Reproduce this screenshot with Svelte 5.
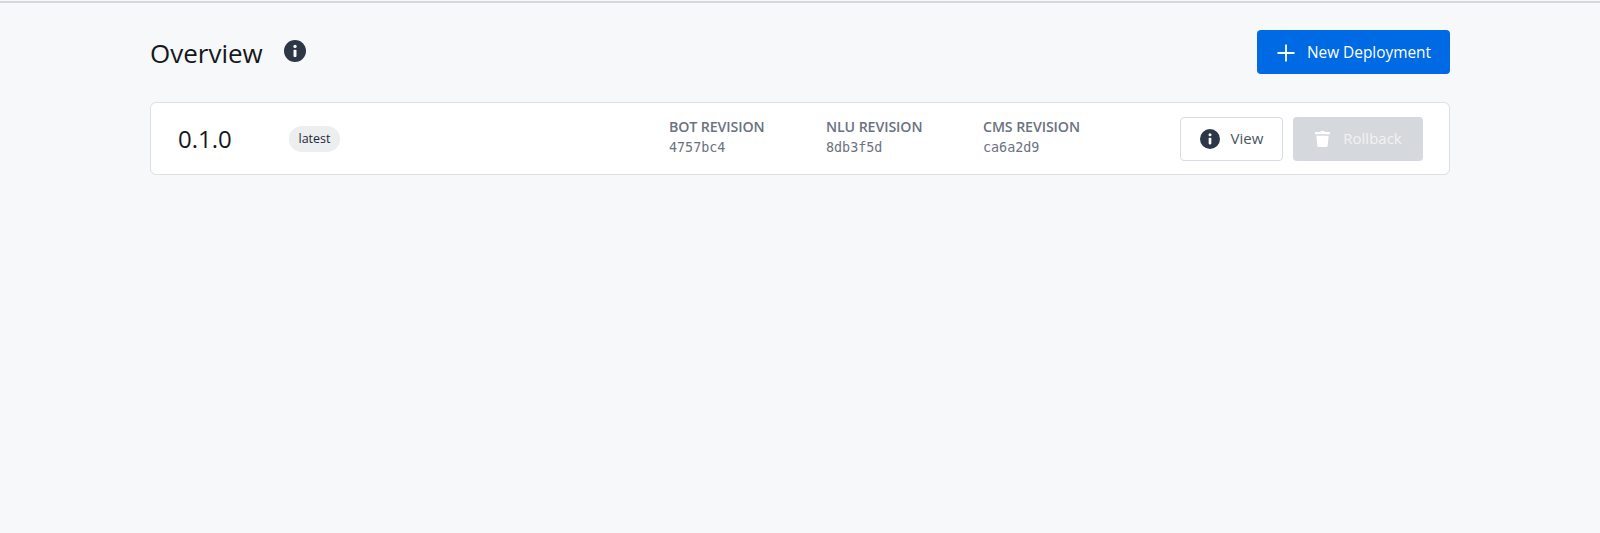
<script>
	const revisions = [
		{ label: 'BOT REVISION', hash: '4757bc4' },
		{ label: 'NLU REVISION', hash: '8db3f5d' },
		{ label: 'CMS REVISION', hash: 'ca6a2d9' }
	];
</script>

{#snippet infoIcon(size)}
	<svg width={size} height={size} viewBox="0 0 24 24" aria-hidden="true">
		<circle cx="12" cy="12" r="12" fill="#2d3748" />
		<circle cx="12" cy="7" r="1.8" fill="#fff" />
		<rect x="10.4" y="10.5" width="3.2" height="8" rx="1" fill="#fff" />
	</svg>
{/snippet}

<main>
	<header>
		<div class="title">
			<h1>Overview</h1>
			{@render infoIcon(22)}
		</div>
		<button class="primary">
			<svg width="20" height="20" viewBox="0 0 20 20" aria-hidden="true">
				<path d="M10 1.5v17M1.5 10h17" stroke="#fff" stroke-width="1.8" fill="none" />
			</svg>
			New Deployment
		</button>
	</header>

	<section class="card">
		<span class="version">0.1.0</span>
		<span class="badge">latest</span>
		<div class="revisions">
			{#each revisions as rev}
				<div class="revision">
					<span class="label">{rev.label}</span>
					<code>{rev.hash}</code>
				</div>
			{/each}
		</div>
		<div class="actions">
			<button class="view">
				{@render infoIcon(20)}
				<span>View</span>
			</button>
			<button class="rollback" disabled>
				<svg width="17" height="17" viewBox="0 0 18 18" aria-hidden="true">
					<path d="M1 2.2h5.5L7.5 1h3l1 1.2H17v2.4H1zM2.5 6h13l-1 10.4A1.6 1.6 0 0 1 12.9 18H5.1a1.6 1.6 0 0 1-1.6-1.6z" fill="#fff" />
				</svg>
				<span>Rollback</span>
			</button>
		</div>
	</section>
</main>

<style>
	:global(body) {
		margin: 0;
		background: #f7f8fa;
		font-family: "Open Sans", "Noto Sans", sans-serif;
		color: #16181d;
	}

	main {
		height: 531px;
		border-top: 2px solid #d5d7dc;
		margin-top: 1px;
		padding: 0 150px;
		box-sizing: border-box;
	}

	header {
		display: flex;
		align-items: center;
		justify-content: space-between;
		padding-top: 27px;
		height: 44px;
		margin-bottom: 28px;
	}

	.title {
		display: flex;
		align-items: flex-start;
		gap: 21px;
	}

	.title svg {
		margin-top: 4px;
	}

	h1 {
		margin: 1px 0 0;
		font-size: 26px;
		line-height: 32px;
		font-weight: 500;
	}

	button {
		display: flex;
		align-items: center;
		font-family: inherit;
		font-size: 15px;
		height: 44px;
		border-radius: 4px;
		box-sizing: border-box;
		padding: 0;
	}

	button span {
		margin-bottom: 2px;
	}

	.primary {
		width: 193px;
		justify-content: center;
		gap: 11px;
		padding-top: 1px;
		background: #0069e4;
		border: none;
		color: #fff;
		font-size: 15.4px;
		font-weight: 500;
	}

	.card {
		display: flex;
		align-items: center;
		height: 73px;
		box-sizing: border-box;
		padding: 0 26px 0 27px;
		background: #fff;
		border: 1px solid #dcdfe3;
		border-radius: 6px;
	}

	.version {
		width: 111px;
		font-size: 24px;
		line-height: 32px;
		font-weight: 500;
	}

	.badge {
		background: #edeef0;
		border-radius: 14px;
		padding: 0 9.5px;
		height: 26px;
		font-size: 12.5px;
		line-height: 26px;
		color: #1f2937;
	}

	.revisions {
		display: flex;
		margin-left: auto;
		margin-bottom: 3px;
	}

	.revision {
		display: flex;
		flex-direction: column;
		width: 157px;
	}

	.revision:last-child {
		width: 197px;
	}

	.label {
		font-size: 14.2px;
		line-height: 20px;
		font-weight: 600;
		color: #6b7280;
		letter-spacing: -0.1px;
	}

	code {
		font-family: "DejaVu Sans Mono", monospace;
		font-size: 13.4px;
		line-height: 21px;
		color: #6b7280;
	}

	.actions {
		display: flex;
		gap: 10px;
	}

	.view {
		width: 103px;
		justify-content: center;
		gap: 11px;
		background: #fff;
		border: 1px solid #d9dce1;
		color: #4b5563;
	}

	.rollback {
		width: 130px;
		justify-content: center;
		gap: 12px;
		background: #d5d8dc;
		border: none;
		color: #f2f3f5;
		font-weight: 500;
	}
</style>
